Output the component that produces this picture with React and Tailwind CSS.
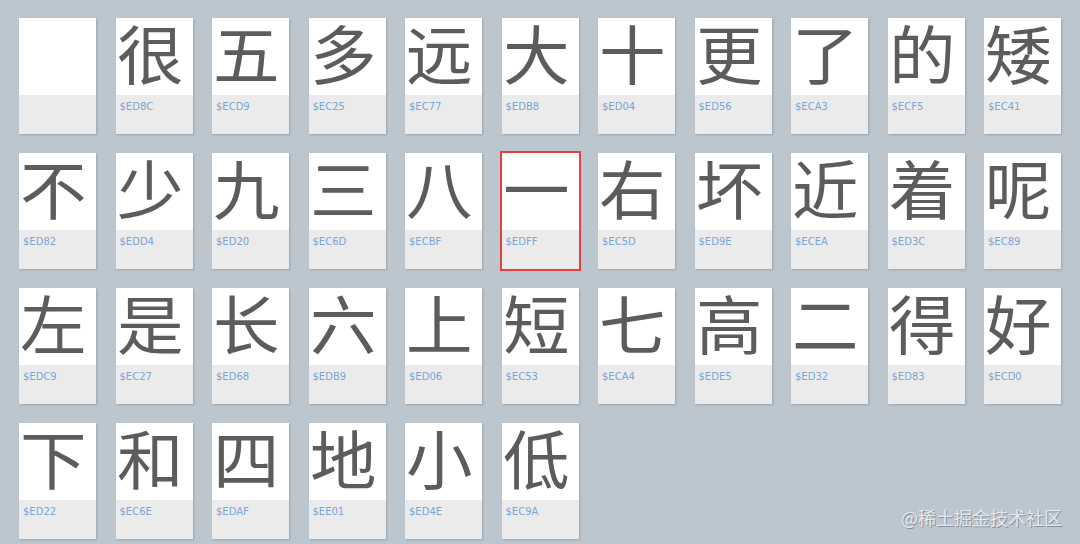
import React from 'react';

const glyphs = [
  ['', ''],
  ['很', '$ED8C'], ['五', '$ECD9'], ['多', '$EC25'], ['远', '$EC77'], ['大', '$EDB8'],
  ['十', '$ED04'], ['更', '$ED56'], ['了', '$ECA3'], ['的', '$ECF5'], ['矮', '$EC41'],
  ['不', '$ED82'], ['少', '$EDD4'], ['九', '$ED20'], ['三', '$EC6D'], ['八', '$ECBF'],
  ['一', '$EDFF'], ['右', '$EC5D'], ['坏', '$ED9E'], ['近', '$ECEA'], ['着', '$ED3C'],
  ['呢', '$EC89'],
  ['左', '$EDC9'], ['是', '$EC27'], ['长', '$ED68'], ['六', '$EDB9'], ['上', '$ED06'],
  ['短', '$EC53'], ['七', '$ECA4'], ['高', '$EDE5'], ['二', '$ED32'], ['得', '$ED83'],
  ['好', '$ECD0'],
  ['下', '$ED22'], ['和', '$EC6E'], ['四', '$EDAF'], ['地', '$EE01'], ['小', '$ED4E'],
  ['低', '$EC9A'],
];

const GlyphCard = ({ char, code, selected }) => (
  <div
    className={`flex h-[116px] w-[77px] flex-col bg-white shadow-[1px_1px_2px_rgba(0,0,0,0.18)] ${
      selected ? 'outline-2 outline-[#e5403b]' : ''
    }`}
  >
    <div className="h-[77px] pl-[1px] text-[64px] leading-[66px] text-[#5c5c5c] [font-family:'Noto_Sans_CJK_SC',sans-serif]">
      <span className="inline-block origin-left scale-x-[1.04]">{char}</span>
    </div>
    <div className="flex-1 bg-[#ebebeb] px-[4px] pt-[6px] text-[10px] leading-[12px] text-[#79a6d6] [font-family:Tahoma,'DejaVu_Sans',sans-serif]">
      {code}
    </div>
  </div>
);

export default function App() {
  return (
    <div className="relative min-h-[544px] w-full bg-[#bcc6cf] pl-[19px] pt-[18px]">
      <div className="grid grid-cols-[repeat(11,77px)] gap-x-[19.5px] gap-y-[19px]">
        {glyphs.map(([char, code], i) => (
          <GlyphCard key={i} char={char} code={code} selected={code === '$EDFF'} />
        ))}
      </div>
      <div className="absolute bottom-[17px] right-[18px] text-[18px] leading-[20px] text-[#e4e8ec] [font-family:'Noto_Sans_CJK_SC',sans-serif] [text-shadow:1px_1px_0_rgba(90,100,110,0.55)]">
        @稀土掘金技术社区
      </div>
    </div>
  );
}
